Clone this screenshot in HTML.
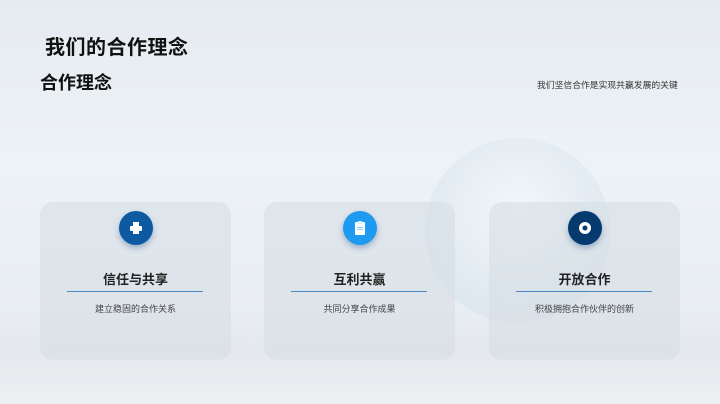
<!DOCTYPE html>
<html><head><meta charset="utf-8"><style>
*{margin:0;padding:0;box-sizing:border-box}
body{width:720px;height:404px;overflow:hidden;position:relative;font-family:"Liberation Sans","Noto Sans CJK SC",sans-serif;
background:linear-gradient(180deg,#e6ebf1 0%,#edf2f6 40%,#e9eef3 70%,#eef1f4 100%);}
.globe{position:absolute;left:425px;top:138px;width:185px;height:185px;border-radius:50%;
background:radial-gradient(circle at 50% 40%,#f3f7fa 0%,#e2ebf2 55%,#dbe6ee 75%,rgba(220,232,240,0) 100%);opacity:.9}
.mount{position:absolute;left:0;top:300px;width:720px;height:104px;background:linear-gradient(180deg,rgba(232,236,240,0),#e4e8ec 50%,#edf0f3)}
.h1{position:absolute;left:45px;top:31px;font-size:20px;font-weight:bold;color:#111;letter-spacing:0.5px}
.h2{position:absolute;left:40px;top:69px;font-size:18px;font-weight:bold;color:#111}
.r{position:absolute;left:537px;top:78px;font-size:8.8px;color:#333}
.card{position:absolute;top:202px;width:191px;height:158px;border-radius:13px;background:rgba(214,221,229,.6)}
.ic{position:absolute;left:50%;top:9px;width:34px;height:34px;margin-left:-17px;border-radius:50%;box-shadow:0 3px 6px rgba(0,60,120,.3);display:flex;align-items:center;justify-content:center}
.t{position:absolute;top:67px;width:100%;text-align:center;font-size:13px;font-weight:bold;color:#222}
.ln{position:absolute;top:89px;left:27px;width:136px;height:1px;background:#4a86c0}
.s{position:absolute;top:100px;width:100%;text-align:center;font-size:9px;color:#444}
</style></head><body>
<div class="globe"></div><div class="mount"></div>
<div class="h1">我们的合作理念</div>
<div class="h2">合作理念</div>
<div class="r">我们坚信合作是实现共赢发展的关键</div>
<div class="card" style="left:40px"><div class="ic" style="background:#0d5aa0"><svg width="16" height="16" viewBox="0 0 16 16"><rect x="5" y="2" width="6" height="4" fill="#fff"/><rect x="2" y="6" width="12" height="5" rx="1" fill="#fff"/><rect x="5" y="10" width="6" height="4" fill="#fff"/></svg></div><div class="t">信任与共享</div><div class="ln"></div><div class="s">建立稳固的合作关系</div></div>
<div class="card" style="left:264px"><div class="ic" style="background:#1e9af0"><svg width="14" height="16" viewBox="0 0 14 16"><rect x="2" y="2" width="10" height="13" rx="1" fill="#fff"/><rect x="5" y="1" width="4" height="3" fill="#d8ecfb"/><rect x="4" y="7" width="6" height="1" fill="#8cc8f5"/><rect x="4" y="9" width="6" height="1" fill="#8cc8f5"/></svg></div><div class="t">互利共赢</div><div class="ln"></div><div class="s">共同分享合作成果</div></div>
<div class="card" style="left:489px"><div class="ic" style="background:#053a6e"><svg width="16" height="16" viewBox="0 0 16 16"><circle cx="8" cy="8" r="6" fill="#fff"/><circle cx="8" cy="8" r="2.5" fill="#053a6e"/></svg></div><div class="t">开放合作</div><div class="ln"></div><div class="s">积极拥抱合作伙伴的创新</div></div>
</body></html>
